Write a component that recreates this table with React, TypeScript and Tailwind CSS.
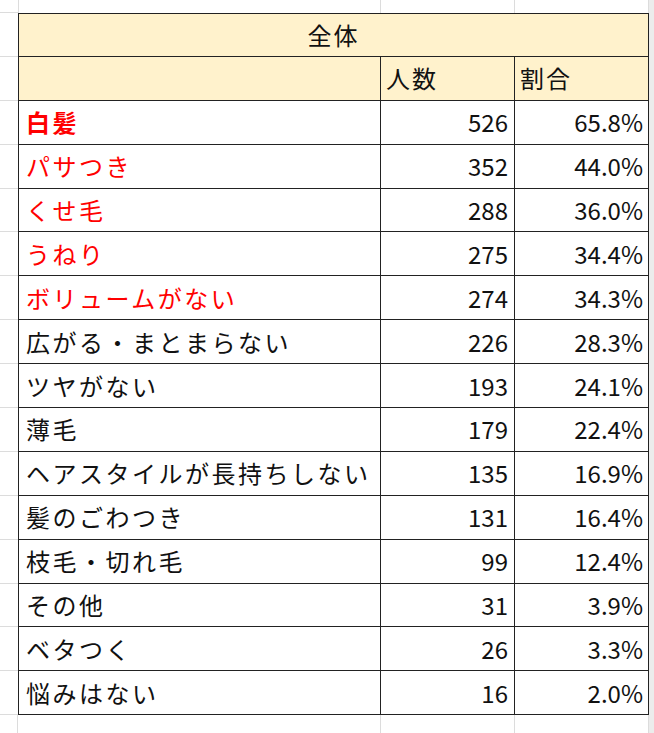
import React from "react";

type Row = { label: string; count: number; rate: string; red?: boolean; bold?: boolean };

const rows: Row[] = [
  { label: "白髪", count: 526, rate: "65.8%", red: true, bold: true },
  { label: "パサつき", count: 352, rate: "44.0%", red: true },
  { label: "くせ毛", count: 288, rate: "36.0%", red: true },
  { label: "うねり", count: 275, rate: "34.4%", red: true },
  { label: "ボリュームがない", count: 274, rate: "34.3%", red: true },
  { label: "広がる・まとまらない", count: 226, rate: "28.3%" },
  { label: "ツヤがない", count: 193, rate: "24.1%" },
  { label: "薄毛", count: 179, rate: "22.4%" },
  { label: "ヘアスタイルが長持ちしない", count: 135, rate: "16.9%" },
  { label: "髪のごわつき", count: 131, rate: "16.4%" },
  { label: "枝毛・切れ毛", count: 99, rate: "12.4%" },
  { label: "その他", count: 31, rate: "3.9%" },
  { label: "ベタつく", count: 26, rate: "3.3%" },
  { label: "悩みはない", count: 16, rate: "2.0%" },
];

const font = { fontFamily: '"Noto Sans CJK JP", "Noto Sans", sans-serif' };

export default function App() {
  return (
    <div
      className="w-[654px] h-[733px] overflow-hidden bg-white text-[24px] leading-none text-[#111] grid grid-cols-[18px_363px_134px_134px_1fr] grid-rows-[13px_repeat(16,43.9px)_1fr]"
      style={font}
    >
      {/* sheet row above the table */}
      <div className="border-b border-[#dcdcdc]" />
      <div className="border-l border-r border-[#dcdcdc]" />
      <div className="border-r border-[#dcdcdc]" />
      <div className="border-r border-[#dcdcdc]" />
      <div className="bg-[#ececec]" />

      {/* title row */}
      <div className="border-b border-[#dcdcdc]" />
      <div className="col-span-3 bg-[#fff2cc] border border-[#222] flex items-center justify-center tracking-[2px]">
        全体
      </div>
      <div className="bg-[#ececec]" />

      {/* column header row */}
      <div className="border-b border-[#dcdcdc]" />
      <div className="bg-[#fff2cc] border-l border-r border-b border-[#222]" />
      <div className="bg-[#fff2cc] border-r border-b border-[#222] flex items-center pl-[5px] tracking-[2px]">
        人数
      </div>
      <div className="bg-[#fff2cc] border-r border-b border-[#222] flex items-center pl-[5px] tracking-[2px]">
        割合
      </div>
      <div className="bg-[#ececec]" />

      {rows.map((r) => (
        <React.Fragment key={r.label}>
          <div className="border-b border-[#dcdcdc]" />
          <div
            className={`border-l border-r border-b border-[#222] flex items-center pl-[7px] tracking-[2.5px] whitespace-nowrap ${
              r.red ? "text-[#ff0000]" : ""
            } ${r.bold ? "font-bold" : ""}`}
          >
            {r.label}
          </div>
          <div className="border-r border-b border-[#222] flex items-center justify-end pr-[6px]">
            {r.count}
          </div>
          <div className="border-r border-b border-[#222] flex items-center justify-end pr-[5px]">
            {r.rate}
          </div>
          <div className="bg-[#ececec]" />
        </React.Fragment>
      ))}

      {/* sheet row below the table */}
      <div className="border-r border-[#dcdcdc]" />
      <div className="border-r border-[#dcdcdc]" />
      <div className="border-r border-[#dcdcdc]" />
      <div className="border-r border-[#dcdcdc]" />
      <div className="bg-[#ececec]" />
    </div>
  );
}
